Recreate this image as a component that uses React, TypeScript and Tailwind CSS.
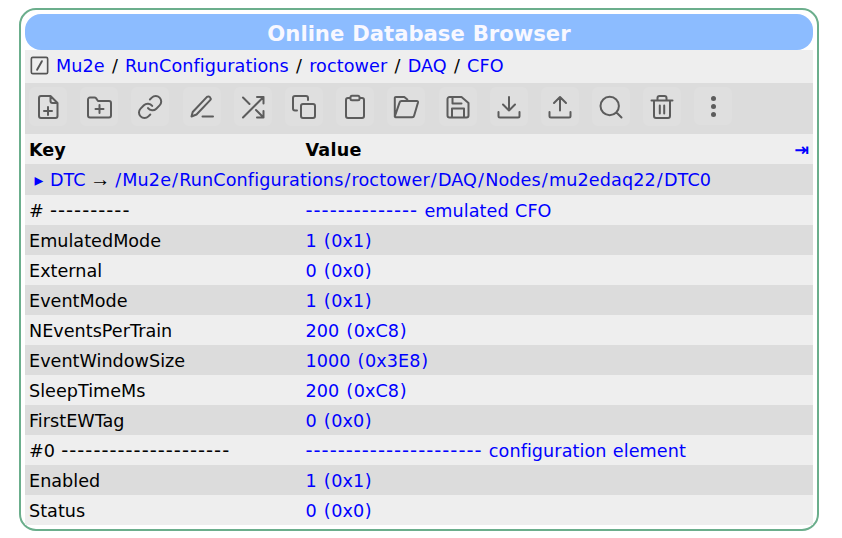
import React from "react";

type Row = { k: string; v: string };
const rows: Row[] = [
  { k: "# ----------", v: "-------------- emulated CFO" },
  { k: "EmulatedMode", v: "1 (0x1)" },
  { k: "External", v: "0 (0x0)" },
  { k: "EventMode", v: "1 (0x1)" },
  { k: "NEventsPerTrain", v: "200 (0xC8)" },
  { k: "EventWindowSize", v: "1000 (0x3E8)" },
  { k: "SleepTimeMs", v: "200 (0xC8)" },
  { k: "FirstEWTag", v: "0 (0x0)" },
  { k: "#0 ---------------------", v: "---------------------- configuration element" },
  { k: "Enabled", v: "1 (0x1)" },
  { k: "Status", v: "0 (0x0)" },
];

const icons: string[] = [
  "M14.500 1H5a2 2 0 0 0-2 2v18a2 2 0 0 0 2 2h14.500a2 2 0 0 0 2-2V8zM14.500 1v5a2 2 0 0 0 2 2h5M12 12v8M8 16h8",
  "M1 4.500a2 2 0 0 1 2-2h4.500a2 2 0 0 1 1.500.700L11 6h11a2 2 0 0 1 2 2v12.500a2 2 0 0 1-2 2H3a2 2 0 0 1-2-2zM12.500 10v8M8.500 14h8",
  "M10 13.100a5.500 5.500 0 0 0 8.300.600l3.300-3.300a5.500 5.500 0 0 0-7.800-7.800l-1.900 1.900M14.200 10.900a5.500 5.500 0 0 0-8.300-.600l-3.300 3.300a5.500 5.500 0 0 0 7.800 7.800l1.900-1.900",
  "M1.500 21.500l1.200-4.500L17 1.900a2.300 2.300 0 0 1 3.200 3.200L6.500 19.500zM12.500 21.500h10.500",
  "M16 2h6.500v6.500M2 22.500L22.500 2M22.500 16v6.500H16M15 15l7.500 7.500M2 2.500l6.500 6.500",
  "M11 9h10a2 2 0 0 1 2 2v10a2 2 0 0 1-2 2H11a2 2 0 0 1-2-2V11a2 2 0 0 1 2-2M5 15.500H3a2 2 0 0 1-2-2V3a2 2 0 0 1 2-2h11a2 2 0 0 1 2 2v2",
  "M7.500 3H5a2 2 0 0 0-2 2v16a2 2 0 0 0 2 2h14a2 2 0 0 0 2-2V5a2 2 0 0 0-2-2h-2.500M9 .800h6a1.500 1.500 0 0 1 1.500 1.500v1.400a1.500 1.500 0 0 1-1.500 1.500H9a1.500 1.500 0 0 1-1.500-1.500V2.300A1.500 1.500 0 0 1 9 .800",
  "M.800 21.500V3a1 1 0 0 1 1-1h8.500l3 2.500V6M.800 21.500a1 1 0 0 0 1 .800h16.300a2 2 0 0 0 2-1.600L24 7.500A1.200 1.200 0 0 0 22.800 6H7.500a2 2 0 0 0-1.900 1.400z",
  "M3.500 2h12L22.500 8v12.500a2 2 0 0 1-2 2h-17a2 2 0 0 1-2-2V4a2 2 0 0 1 2-2M6 22.500V13.500h12v9M6.500 2v6.500h9",
  "M1.500 17v4a1.500 1.500 0 0 0 1.500 1.500h18a1.500 1.500 0 0 0 1.500-1.500v-4M6 9.500l6 6l6-6M12 2v13.500",
  "M1.500 17v4a1.500 1.500 0 0 0 1.500 1.500h18a1.500 1.500 0 0 0 1.500-1.500v-4M6 8l6-6l6 6M12 2v13.500",
  "M1.500 11a9.200 9.200 0 1 0 18.400 0a9.200 9.200 0 1 0-18.400 0M22.500 22.500l-5-5",
  "M1.500 5.500h21M9.800 10.500v8M14.200 10.500v8M4 5.500V21a2 2 0 0 0 2 2h12a2 2 0 0 0 2-2V5.500M7.500 5.500V3a2 2 0 0 1 2-2h5a2 2 0 0 1 2 2v2.500",
];

function Icon({ d }: { d: string }) {
  return (
    <svg viewBox="0 0 24 24" className="size-6 shrink-0 overflow-visible" fill="none" stroke="currentColor" strokeWidth="2" strokeLinecap="round" strokeLinejoin="round">
      <path d={d} />
    </svg>
  );
}

function Label({ text }: { text: string }) {
  return (
    <>
      {text.split(/(-{2,}|[/()])/).map((part, i) => {
        if (part.startsWith("--")) return <span key={i} className="text-[19.5px] leading-none tracking-[1.01px]">{part}</span>;
        if (part === "/") return <span key={i} className="px-[1px]">{part}</span>;
        if (part === "(" || part === ")") return <span key={i} className="px-[0.6px]">{part}</span>;
        return <span key={i}>{part}</span>;
      })}
    </>
  );
}

export default function App() {
  return (
    <div className="h-[538px] w-[842px] overflow-hidden bg-white pl-[19px] pt-2 font-['DejaVu_Sans',sans-serif] text-[17.6px] leading-8 text-black [word-spacing:0.6px]">
      <div className="h-[523px] w-[800px] rounded-[17px] border-2 border-[#6bae8c] p-1">
        <div className="h-9 rounded-[16px] bg-[#8cbcff] text-center text-[21.15px] font-bold leading-10 text-[#f8f8ff]">Online Database Browser</div>
        <div className="flex h-[33px] items-start bg-[#eee] pl-[3px] text-[#00f]">
          <svg viewBox="0 0 24 24" className="mr-[5px] mt-1 size-[23px] text-[#555]" fill="none" stroke="currentColor" strokeWidth="1.7" strokeLinejoin="round"><rect x="3.500" y="3.500" width="17" height="17" rx="1.500" /><path strokeWidth="2" strokeLinecap="round" d="M9.500 16.500l5-9" /></svg>
          {["Mu2e", "RunConfigurations", "roctower", "DAQ", "CFO"].map((p, i) => (
            <React.Fragment key={p}>{i > 0 && <span className="whitespace-pre text-black"><Label text=" / " /></span>}<span className="tracking-[0.09px]">{p}</span></React.Fragment>
          ))}
        </div>
        <div className="flex h-[51px] items-start gap-[13.2px] bg-[#dcdcdc] pl-1 pt-1 text-[#5c5c5c]">
          {icons.map((d, i) => <div key={i} className="flex h-[39px] w-[38px] items-center justify-center rounded-md bg-[#dfdfdf]"><Icon d={d} /></div>)}
          <div className="flex h-[38px] w-[38px] flex-col items-center justify-center gap-[3px] rounded-md bg-[#dfdfdf]">
            {[0, 1, 2].map((n) => <span key={n} className="size-[5px] rounded-full bg-[#5c5c5c]" />)}
          </div>
        </div>
        <div className="flex h-[30px] bg-[#eee] px-1 font-bold">
          <span className="w-[276.5px]">Key</span><span className="tracking-[0.2px]">Value</span><span className="ml-auto font-['Noto_Sans','DejaVu_Sans',sans-serif] leading-[30px] text-[#00f]">⇥</span>
        </div>
        <div className="flex h-[31px] whitespace-pre bg-[#dcdcdc] pl-[9.5px] text-[#00f]">
          <span>▸ </span><span className="ml-[0.5px]">DTC</span>
          <span className="ml-[4.5px] mr-[3.5px] font-['Liberation_Serif',serif] text-[20.6px] leading-[30px] text-black">→</span>
          <span className="tracking-[0.12px]"><Label text="/Mu2e/RunConfigurations/roctower/DAQ/Nodes/mu2edaq22/DTC0" /></span>
        </div>
        <div>
          {rows.map((r) => (
            <div key={r.k} className="flex h-[30px] whitespace-pre px-1 odd:bg-[#eee] even:bg-[#dcdcdc]">
              <span className="w-[276.5px] tracking-[0.02px]"><Label text={r.k} /></span><span className="tracking-[0.08px] text-[#00f]"><Label text={r.v} /></span>
            </div>
          ))}
        </div>
      </div>
    </div>
  );
}
